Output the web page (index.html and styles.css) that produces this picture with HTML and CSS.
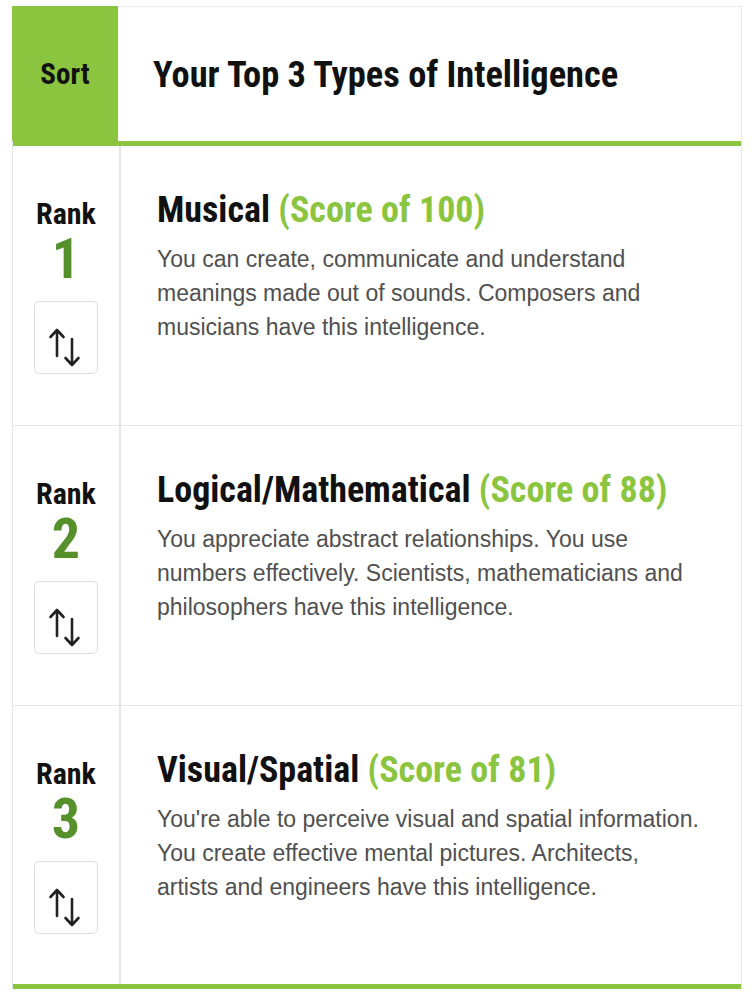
FILE: index.html
```html
<!DOCTYPE html>
<html>
<head>
<meta charset="utf-8">
<link rel="stylesheet" href="styles.css">
</head>
<body>
<div class="card">
  <div class="head">
    <div class="sort">Sort</div>
    <div class="head-title">Your Top 3 Types of Intelligence</div>
  </div>
  <div class="row">
    <div class="rank">
      <div class="rank-label">Rank</div>
      <div class="rank-num">1</div>
      <div class="btn"><svg class="ico" viewBox="0 0 62 71"><path d="M22 28 V54 M15.5 35 L22 28 L28.5 35 M37 37 V63 M30.5 56 L37 63 L43.5 56" fill="none" stroke="#222" stroke-width="2.6" stroke-linecap="round" stroke-linejoin="round"/></svg></div>
    </div>
    <div class="body">
      <div class="title">Musical <span class="score">(Score of 100)</span></div>
      <p class="desc">You can create, communicate and understand meanings made out of sounds. Composers and musicians have this intelligence.</p>
    </div>
  </div>
  <div class="row">
    <div class="rank">
      <div class="rank-label">Rank</div>
      <div class="rank-num">2</div>
      <div class="btn"><svg class="ico" viewBox="0 0 62 71"><path d="M22 28 V54 M15.5 35 L22 28 L28.5 35 M37 37 V63 M30.5 56 L37 63 L43.5 56" fill="none" stroke="#222" stroke-width="2.6" stroke-linecap="round" stroke-linejoin="round"/></svg></div>
    </div>
    <div class="body">
      <div class="title">Logical/Mathematical <span class="score">(Score of 88)</span></div>
      <p class="desc">You appreciate abstract relationships. You use numbers effectively. Scientists, mathematicians and philosophers have this intelligence.</p>
    </div>
  </div>
  <div class="row last">
    <div class="rank">
      <div class="rank-label">Rank</div>
      <div class="rank-num">3</div>
      <div class="btn"><svg class="ico" viewBox="0 0 62 71"><path d="M22 28 V54 M15.5 35 L22 28 L28.5 35 M37 37 V63 M30.5 56 L37 63 L43.5 56" fill="none" stroke="#222" stroke-width="2.6" stroke-linecap="round" stroke-linejoin="round"/></svg></div>
    </div>
    <div class="body">
      <div class="title">Visual/Spatial <span class="score">(Score of 81)</span></div>
      <p class="desc">You're able to perceive visual and spatial information. You create effective mental pictures. Architects, artists and engineers have this intelligence.</p>
    </div>
  </div>
</div>
</body>
</html>
```
FILE: styles.css
```css
* { box-sizing: border-box; }
body {
  margin: 0;
  background: #fff;
  font-family: "Liberation Sans", Arial, sans-serif;
}
.card {
  margin: 6px 0 0 12px;
  width: 730px;
  border-left: 1px solid #e6e6e6;
  border-right: 1px solid #e6e6e6;
  border-top: 1px solid #ececec;
}
.head {
  display: flex;
  height: 139px;
  border-bottom: 5px solid #8bc540;
}
.sort {
  width: 106px;
  margin-left: -1px;
  margin-top: -1px;
  background: #8bc540;
  display: flex;
  align-items: center;
  justify-content: center;
  font-family: "Roboto Condensed", "Liberation Sans", sans-serif;
  font-weight: bold;
  font-size: 29px;
  color: #111;
}
.head-title {
  display: flex;
  align-items: center;
  padding-left: 35px;
  font-family: "Roboto Condensed", "Liberation Sans", sans-serif;
  font-weight: bold;
  font-size: 36.4px;
  color: #111;
}
.row {
  display: flex;
  height: 280px;
  border-bottom: 1px solid #e6e6e6;
}
.row.last {
  height: 283px;
  border-bottom: 5px solid #8bc540;
}
.rank {
  width: 108px;
  border-right: 2px solid #e6e6e6;
  display: flex;
  flex-direction: column;
  align-items: center;
  padding-top: 53px;
  font-family: "Roboto Condensed", "Liberation Sans", sans-serif;
  font-weight: bold;
}
.rank-label {
  font-size: 30px;
  line-height: 30px;
  color: #111;
}
.rank-num {
  margin-top: 5px;
  font-size: 56px;
  line-height: 50px;
  color: #55902b;
}
.btn {
  margin-top: 17px;
  width: 64px;
  height: 73px;
  border: 1px solid #dedede;
  border-radius: 5px;
}
.ico {
  display: block;
  width: 62px;
  height: 71px;
}
.body {
  flex: 1;
  padding: 44px 35px 0 36px;
}
.title {
  font-family: "Roboto Condensed", "Liberation Sans", sans-serif;
  font-weight: bold;
  font-size: 36px;
  line-height: 40px;
  color: #111;
}
.score { color: #8bc540; }
.desc {
  margin: 12px 0 0;
  font-size: 23px;
  line-height: 34px;
  color: #505050;
}
```
